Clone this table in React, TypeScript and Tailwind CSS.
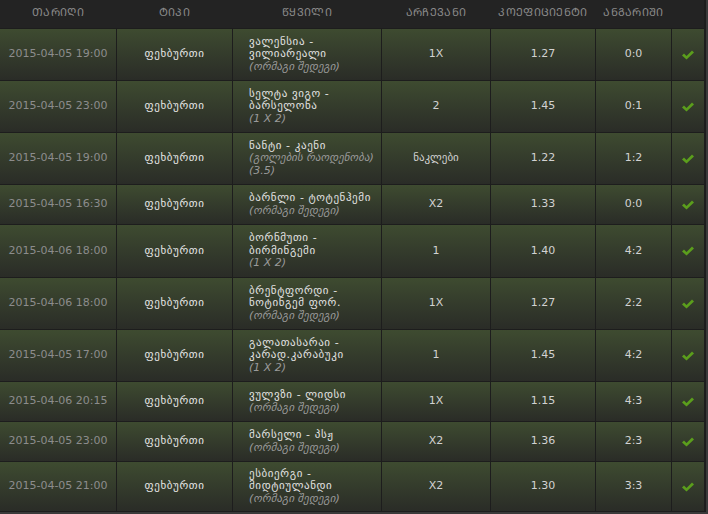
import React from "react";

type Row = {
  date: string;
  pair: string[];
  note: string[];
  pick: string;
  coef: string;
  score: string;
  h: string;
};

const rows: Row[] = [
  { date: "2015-04-05 19:00", pair: ["ვალენსია -", "ვილიარეალი"], note: ["(ორმაგი შედეგი)"], pick: "1X", coef: "1.27", score: "0:0", h: "h-[51px]" },
  { date: "2015-04-05 23:00", pair: ["სელტა ვიგო -", "ბარსელონა"], note: ["(1 X 2)"], pick: "2", coef: "1.45", score: "0:1", h: "h-[51px]" },
  { date: "2015-04-05 19:00", pair: ["ნანტი - კაენი"], note: ["(გოლების რაოდენობა)", "(3.5)"], pick: "ნაკლები", coef: "1.22", score: "1:2", h: "h-[51px]" },
  { date: "2015-04-05 16:30", pair: ["ბარნლი - ტოტენჰემი"], note: ["(ორმაგი შედეგი)"], pick: "X2", coef: "1.33", score: "0:0", h: "h-[39px]" },
  { date: "2015-04-06 18:00", pair: ["ბორნმუთი -", "ბირმინგემი"], note: ["(1 X 2)"], pick: "1", coef: "1.40", score: "4:2", h: "h-[52px]" },
  { date: "2015-04-06 18:00", pair: ["ბრენტფორდი -", "ნოტინგემ ფორ."], note: ["(ორმაგი შედეგი)"], pick: "1X", coef: "1.27", score: "2:2", h: "h-[51px]" },
  { date: "2015-04-05 17:00", pair: ["გალათასარაი -", "კარად.კარაბუკი"], note: ["(1 X 2)"], pick: "1", coef: "1.45", score: "4:2", h: "h-[51px]" },
  { date: "2015-04-06 20:15", pair: ["ვულვზი - ლიდსი"], note: ["(ორმაგი შედეგი)"], pick: "1X", coef: "1.15", score: "4:3", h: "h-[39px]" },
  { date: "2015-04-05 23:00", pair: ["მარსელი - პსჟ"], note: ["(ორმაგი შედეგი)"], pick: "X2", coef: "1.36", score: "2:3", h: "h-[39px]" },
  { date: "2015-04-05 21:00", pair: ["ესბიერგი -", "მიდტიულანდი"], note: ["(ორმაგი შედეგი)"], pick: "X2", coef: "1.30", score: "3:3", h: "h-[49px]" },
];

// header labels are shown in mtavruli (georgian caps)
const heads = ["ᲗᲐᲠᲘᲦᲘ", "ᲢᲘᲞᲘ", "ᲬᲧᲕᲘᲚᲘ", "ᲐᲠᲩᲔᲕᲐᲜᲘ", "ᲙᲝᲔᲤᲘᲪᲘᲔᲜᲢᲘ", "ᲐᲜᲒᲐᲠᲘᲨᲘ", ""];

const cols = "grid grid-cols-[116px_115px_148px_108px_104px_75px_32px] gap-x-px";
const cell = "flex items-center justify-center bg-gradient-to-b from-[#3e4b30] to-[#2a2c27]";

function Check() {
  return (
    <svg width="12" height="10" viewBox="0 0 12 10">
      <polygon points="0,5.5 2,3.5 4.5,6 10,0.5 12,2.5 4.5,9.5" fill="#5b9e1c" />
    </svg>
  );
}

export default function App() {
  return (
    <div className="w-[708px] h-[514px] bg-[#3a3a3a] font-['DejaVu_Sans',sans-serif] text-[11px] overflow-hidden">
      <div className="w-[706px] bg-[#1d1d1d] flex flex-col gap-y-px pr-[2px] pb-px">
        <div className={`${cols} h-[28px] bg-[#232323]`}>
          {heads.map((t, i) => (
            <div key={i} className="flex items-center justify-center tracking-[0.3px] text-[#8a8a8a] text-[11px] pb-[2px]">
              {t}
            </div>
          ))}
        </div>
        {rows.map((r, i) => (
          <div key={i} className={`${cols} ${r.h}`}>
            <div className={`${cell} text-[#8c8c8c]`}>{r.date}</div>
            <div className={`${cell} text-[#e6e6e6] tracking-[0.6px]`}>ფეხბურთი</div>
            <div className={`${cell} !justify-start pl-[16px] leading-[12.5px] whitespace-nowrap`}>
              <div className="flex flex-col">
                {r.pair.map((p, j) => (
                  <span key={j} className="text-[#e2e2e2] tracking-[0.6px]">{p}</span>
                ))}
                {r.note.map((n, j) => (
                  <span key={j} className="italic text-[#9a9a9a]">{n}</span>
                ))}
              </div>
            </div>
            <div className={`${cell} text-[#d2d2d2]`}>{r.pick}</div>
            <div className={`${cell} text-[#d2d2d2]`}>{r.coef}</div>
            <div className={`${cell} text-[#d2d2d2]`}>{r.score}</div>
            <div className={cell}>
              <Check />
            </div>
          </div>
        ))}
      </div>
    </div>
  );
}
